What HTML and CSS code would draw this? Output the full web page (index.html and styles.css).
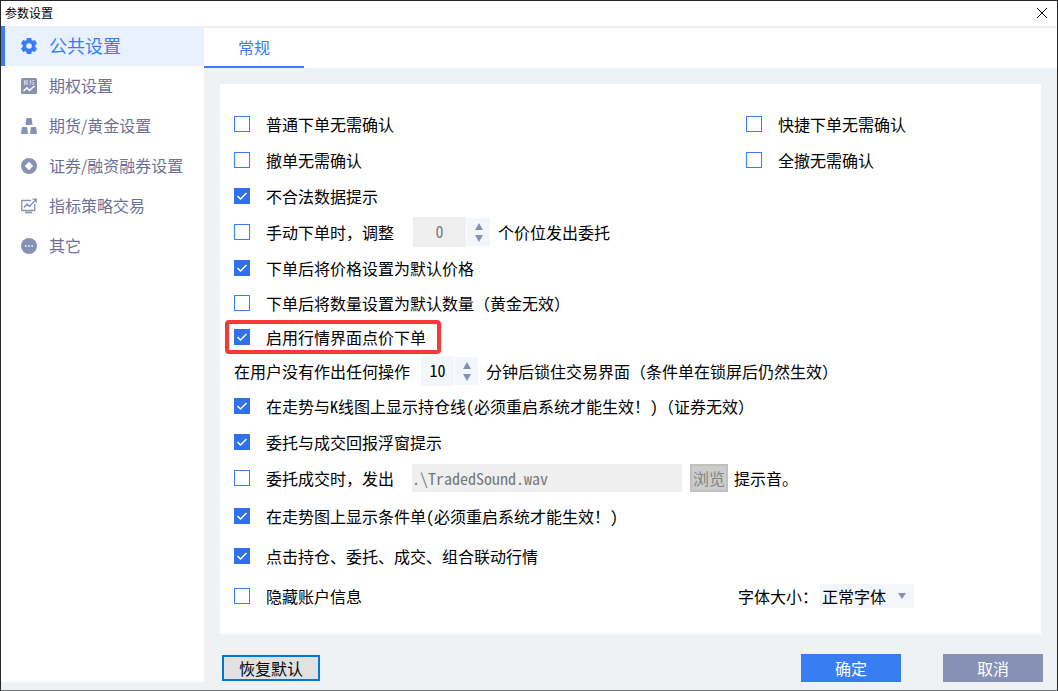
FILE: index.html
```html
<!DOCTYPE html>
<html lang="zh-CN">
  <head>
    <meta charset="UTF-8" />
    <meta name="viewport" content="width=device-width, initial-scale=1.0" />
    <title>参数设置</title>
    <link rel="stylesheet" href="styles.css">
  </head>
  <body>
    <header class="titlebar">
      <h1>参数设置</h1>
      <button class="close" aria-label="关闭">
        <svg width="12" height="12" viewBox="0 0 12 12"><path d="M1 1l10 10M11 1L1 11" stroke="#000" stroke-width="1" fill="none" /></svg>
      </button>
    </header>
    <div class="layout">
      <nav class="sidebar">
        <a class="active" href="#">
          <svg width="16" height="16" viewBox="0 0 16 16">
            <path fill-rule="evenodd" d="M5.800 0h4.400l.5 2.200 1 .6 2.200-.7L16 5.500 14.300 7v2L16 10.500l-2.100 3.400-2.200-.7-1 .6-.5 2.200H5.800l-.5-2.200-1-.6-2.200.7L0 10.500 1.700 9V7L0 5.500l2.100-3.400 2.200.7 1-.6zM8 5.200a2.800 2.800 0 1 0 0 5.600 2.800 2.800 0 0 0 0-5.600z" />
          </svg>
          <span>公共设置</span>
        </a>
        <a href="#">
          <svg width="16" height="16" viewBox="0 0 16 16">
            <rect width="16" height="16" rx="1.5" />
            <path d="M2.500 13l3.500-3.200 2.500 2.700 5-4.500" fill="none" stroke="#fff" stroke-width="1.600" />
            <path d="M3.500 2v5M6 2v5M2.500 3h4.500M3.500 4.500h2.500M2.500 6h4.500M9.500 2v5M8.500 3.500h2M11 2.500h2.500M11 4l2.500 3M13.500 4L11 7" fill="none" stroke="#dfe2ec" stroke-width=".7" />
          </svg>
          <span>期权设置</span>
        </a>
        <a href="#">
          <svg width="16" height="16" viewBox="0 0 16 16">
            <path d="M6 0h4q.6 0 .7.6L11.500 7h-7l.8-6.400Q5.400 0 6 0zM1.500 9h4q.6 0 .7.6L7 16H0l.8-6.400q.1-.6.7-.6zM10.500 9h4q.6 0 .7.6L16 16H9l.8-6.400q.1-.6.7-.6z" />
          </svg>
          <span>期货/黄金设置</span>
        </a>
        <a href="#">
          <svg width="16" height="16" viewBox="0 0 16 16">
            <path fill-rule="evenodd" d="M8 0a8 8 0 1 0 0 16A8 8 0 0 0 8 0zm0 3.800L12.200 8 8 12.200 3.800 8z" />
          </svg>
          <span>证券/融资融券设置</span>
        </a>
        <a href="#">
          <svg width="16" height="16" viewBox="0 0 16 16">
            <path d="M10 2.500H.8v10h12.900V6M4 14.500h7M3 9.500l3-3.500 2.500 2.500L15 1.500M11.500 1.200h3.700v3.600" fill="none" stroke="#8790b5" stroke-width="1.3" />
          </svg>
          <span>指标策略交易</span>
        </a>
        <a href="#">
          <svg width="16" height="16" viewBox="0 0 16 16">
            <circle cx="8" cy="8" r="8" />
            <path d="M4 7.200h1.600v1.600H4zM7.200 7.200h1.600v1.600H7.200zM10.400 7.200H12v1.600h-1.600z" fill="#fff" />
          </svg>
          <span>其它</span>
        </a>
      </nav>

      <main class="content">
        <div class="tabs">
          <button class="tab">常规</button>
        </div>

        <form class="panel">
          <div class="rows">
            <div class="row split">
              <label class="check"><input type="checkbox" />普通下单无需确认</label>
              <label class="check"><input type="checkbox" />快捷下单无需确认</label>
            </div>
            <div class="row split">
              <label class="check"><input type="checkbox" />撤单无需确认</label>
              <label class="check"><input type="checkbox" />全撤无需确认</label>
            </div>
            <div class="row">
              <label class="check"><input type="checkbox" checked />不合法数据提示</label>
            </div>
            <div class="row">
              <label class="check"><input type="checkbox" />手动下单时，调整</label>
              <div class="spin wide">
                <input type="text" value="0" aria-label="价位" disabled />
                <div class="arrows">
                  <button type="button" aria-label="增加"><svg width="10" height="7" viewBox="0 0 10 7"><path d="M5 0l4 7H1z" /></svg></button>
                  <button type="button" aria-label="减少"><svg width="10" height="7" viewBox="0 0 10 7"><path d="M1 0h8L5 7z" /></svg></button>
                </div>
              </div>
              <span>个价位发出委托</span>
            </div>
            <div class="row">
              <label class="check"><input type="checkbox" checked />下单后将价格设置为默认价格</label>
            </div>
          </div>

          <div class="rows compact">
            <div class="row">
              <label class="check"><input type="checkbox" />下单后将数量设置为默认数量（黄金无效）</label>
            </div>
            <div class="row">
              <label class="check highlight"><input type="checkbox" checked />启用行情界面点价下单</label>
            </div>
            <div class="row">
              <label for="lockTime">在用户没有作出任何操作</label>
              <div class="spin">
                <input type="text" id="lockTime" value="10" />
                <div class="arrows">
                  <button type="button" aria-label="增加"><svg width="10" height="7" viewBox="0 0 10 7"><path d="M5 0l4 7H1z" /></svg></button>
                  <button type="button" aria-label="减少"><svg width="10" height="7" viewBox="0 0 10 7"><path d="M1 0h8L5 7z" /></svg></button>
                </div>
              </div>
              <span>分钟后锁住交易界面（条件单在锁屏后仍然生效）</span>
            </div>
          </div>

          <div class="rows">
            <div class="row">
              <label class="check"><input type="checkbox" checked /><span>在走势与<span class="half">K</span>线图上显示持仓线<span class="half">(</span>必须重启系统才能生效！<span class="half">)</span>（证券无效）</span></label>
            </div>
            <div class="row">
              <label class="check"><input type="checkbox" checked />委托与成交回报浮窗提示</label>
            </div>
            <div class="row">
              <label class="check"><input type="checkbox" />委托成交时，发出</label>
              <input class="path" type="text" value=".\TradedSound.wav" aria-label="提示音文件" disabled />
              <button class="browse" type="button" disabled>浏览</button>
              <span>提示音。</span>
            </div>
          </div>

          <div class="rows loose">
            <div class="row">
              <label class="check"><input type="checkbox" checked /><span>在走势图上显示条件单<span class="half">(</span>必须重启系统才能生效！<span class="half">)</span></span></label>
            </div>
            <div class="row">
              <label class="check"><input type="checkbox" checked />点击持仓、委托、成交、组合联动行情</label>
            </div>
            <div class="row split font-row">
              <label class="check"><input type="checkbox" />隐藏账户信息</label>
              <div class="font-size">
                <label for="fontSize">字体大小：</label>
                <div class="select">
                  <select id="fontSize">
                    <option>正常字体</option>
                  </select>
                  <svg width="8" height="6" viewBox="0 0 8 6"><path d="M0 0h8L4 6z" /></svg>
                </div>
              </div>
            </div>
          </div>
        </form>

        <footer class="actions">
          <button class="reset">恢复默认</button>
          <button class="btn ok">确定</button>
          <button class="btn cancel">取消</button>
        </footer>
      </main>
    </div>
  </body>
</html>
```

FILE: styles.css
```css
* {
  box-sizing: border-box;
}
body {
  display: flex;
  flex-direction: column;
  min-height: 100vh;
  margin: 0;
  border: 1px solid #262626;
  border-bottom-color: #707274;
  background-color: #eef2f5;
  color: #000;
  font-family: "Noto Sans CJK SC", sans-serif;
  font-size: 16px;
  line-height: 24px;
  text-spacing-trim: space-all;
}
button,
input,
select {
  margin: 0;
  padding: 0;
  border: none;
  border-radius: 0;
  font: inherit;
  color: inherit;
}
svg {
  display: block;
  flex: none;
}
.titlebar {
  display: flex;
  justify-content: space-between;
  align-items: center;
  height: 25px;
  padding: 0 8px 2px 4px;
  background-color: #fff;
}
.titlebar h1 {
  margin: 0;
  font-size: 12px;
  font-weight: normal;
}
.close {
  padding: 1px;
  background: none;
}
.layout {
  display: flex;
  flex: 1;
}

/* left menu */
.sidebar {
  width: 203px;
  flex: none;
  margin-bottom: 8px;
  background-color: #fff;
}
.sidebar a {
  display: flex;
  align-items: center;
  gap: 12px;
  height: 40px;
  padding-left: 16px;
  border-left: 4px solid transparent;
  color: #6b7199;
  text-decoration: none;
}
.sidebar span {
  padding-bottom: 2px;
}
.sidebar svg {
  fill: #8790b5;
}
.sidebar a.active {
  border-left-color: #3a7cf8;
  background-color: #e9f1ff;
  color: #3a7cf8;
  font-size: 18px;
}
.sidebar a.active svg {
  fill: #3a7cf8;
}

.content {
  display: flex;
  flex-direction: column;
  flex: 1;
  min-width: 0;
}
.tabs {
  display: flex;
  height: 42px;
  border-top: 2px solid #efefef;
  background-color: #fff;
}
.tab {
  width: 100px;
  border-bottom: 2px solid #3a7cf8;
  background: none;
  color: #3a7cf8;
}
.panel {
  flex: 1;
  margin: 16px 16px 0;
  padding: 22px 14px 18px;
  background-color: #fff;
}
.row {
  display: flex;
  align-items: center;
  height: 36px;
  white-space: nowrap;
}
.compact .row {
  height: 34px;
}
.loose .row {
  height: 40px;
}
.split {
  display: grid;
  grid-template-columns: 1fr 281px;
}
.font-row {
  grid-template-columns: 1fr 289px;
}

.check {
  display: flex;
  align-items: center;
  gap: 16px;
}
.check input {
  appearance: none;
  width: 16px;
  height: 16px;
  border: 1px solid #3a7cf8;
  background-color: #fff;
}
.check input:checked {
  border-color: #3070e8;
  background: #3070e8 url("data:image/svg+xml,%3Csvg xmlns='http://www.w3.org/2000/svg' viewBox='0 0 14 14'%3E%3Cpath d='M2.500 7l3 3L11.500 4' fill='none' stroke='%23fff' stroke-width='1.500'/%3E%3C/svg%3E") center no-repeat;
}
.highlight {
  height: 34px;
  margin-left: -9px;
  padding: 0 11px 0 5px;
  border: 4px solid #fb3838;
  border-radius: 4px;
}
.half {
  font-feature-settings: "hwid";
}

.spin {
  display: flex;
  align-items: center;
  gap: 1px;
  margin: 0 8px 0 11px;
}
.spin input {
  width: 33px;
  height: 30px;
  padding-bottom: 2px;
  background-color: #f3f7fb;
  text-align: center;
  font-feature-settings: "hwid";
}
.spin.wide {
  margin-left: 19px;
}
.spin.wide input {
  width: 53px;
}
.spin input:disabled,
.path:disabled {
  background-color: #efefef;
  color: #787878;
}
.arrows {
  display: flex;
  flex-direction: column;
  justify-content: center;
  gap: 5px;
  width: 23px;
  height: 28px;
  background-color: #f3f7fb;
}
.arrows button {
  display: flex;
  justify-content: center;
  background: none;
}
.arrows svg,
.select svg {
  fill: #8790b5;
}
.path {
  width: 270px;
  height: 28px;
  margin: 0 8px 0 18px;
  font-feature-settings: "hwid";
}
.browse {
  width: 38px;
  height: 28px;
  margin-right: 6px;
  border: 2px solid #c0c0c0;
  background-color: #cccccc;
  color: #838383;
}
.font-size {
  display: flex;
  align-items: center;
}
.select {
  position: relative;
  width: 94px;
  margin-left: 2px;
}
.select select {
  appearance: none;
  display: block;
  width: 100%;
  height: 24px;
  padding-left: 2px;
  background-color: #f3f7fb;
}
.select svg {
  position: absolute;
  top: 9px;
  right: 8px;
  pointer-events: none;
}

.actions {
  display: flex;
  align-items: center;
  padding: 20px 14px 8px 18px;
}
.reset {
  width: 98px;
  height: 26px;
  margin-right: auto;
  border: 2px solid #0078d7;
  background-color: #e1e1e1;
  line-height: 22px;
}
.btn {
  width: 100px;
  height: 28px;
  color: #fff;
}
.ok {
  margin-right: 42px;
  background-color: #387ef2;
}
.cancel {
  background-color: #8790b5;
}
```
